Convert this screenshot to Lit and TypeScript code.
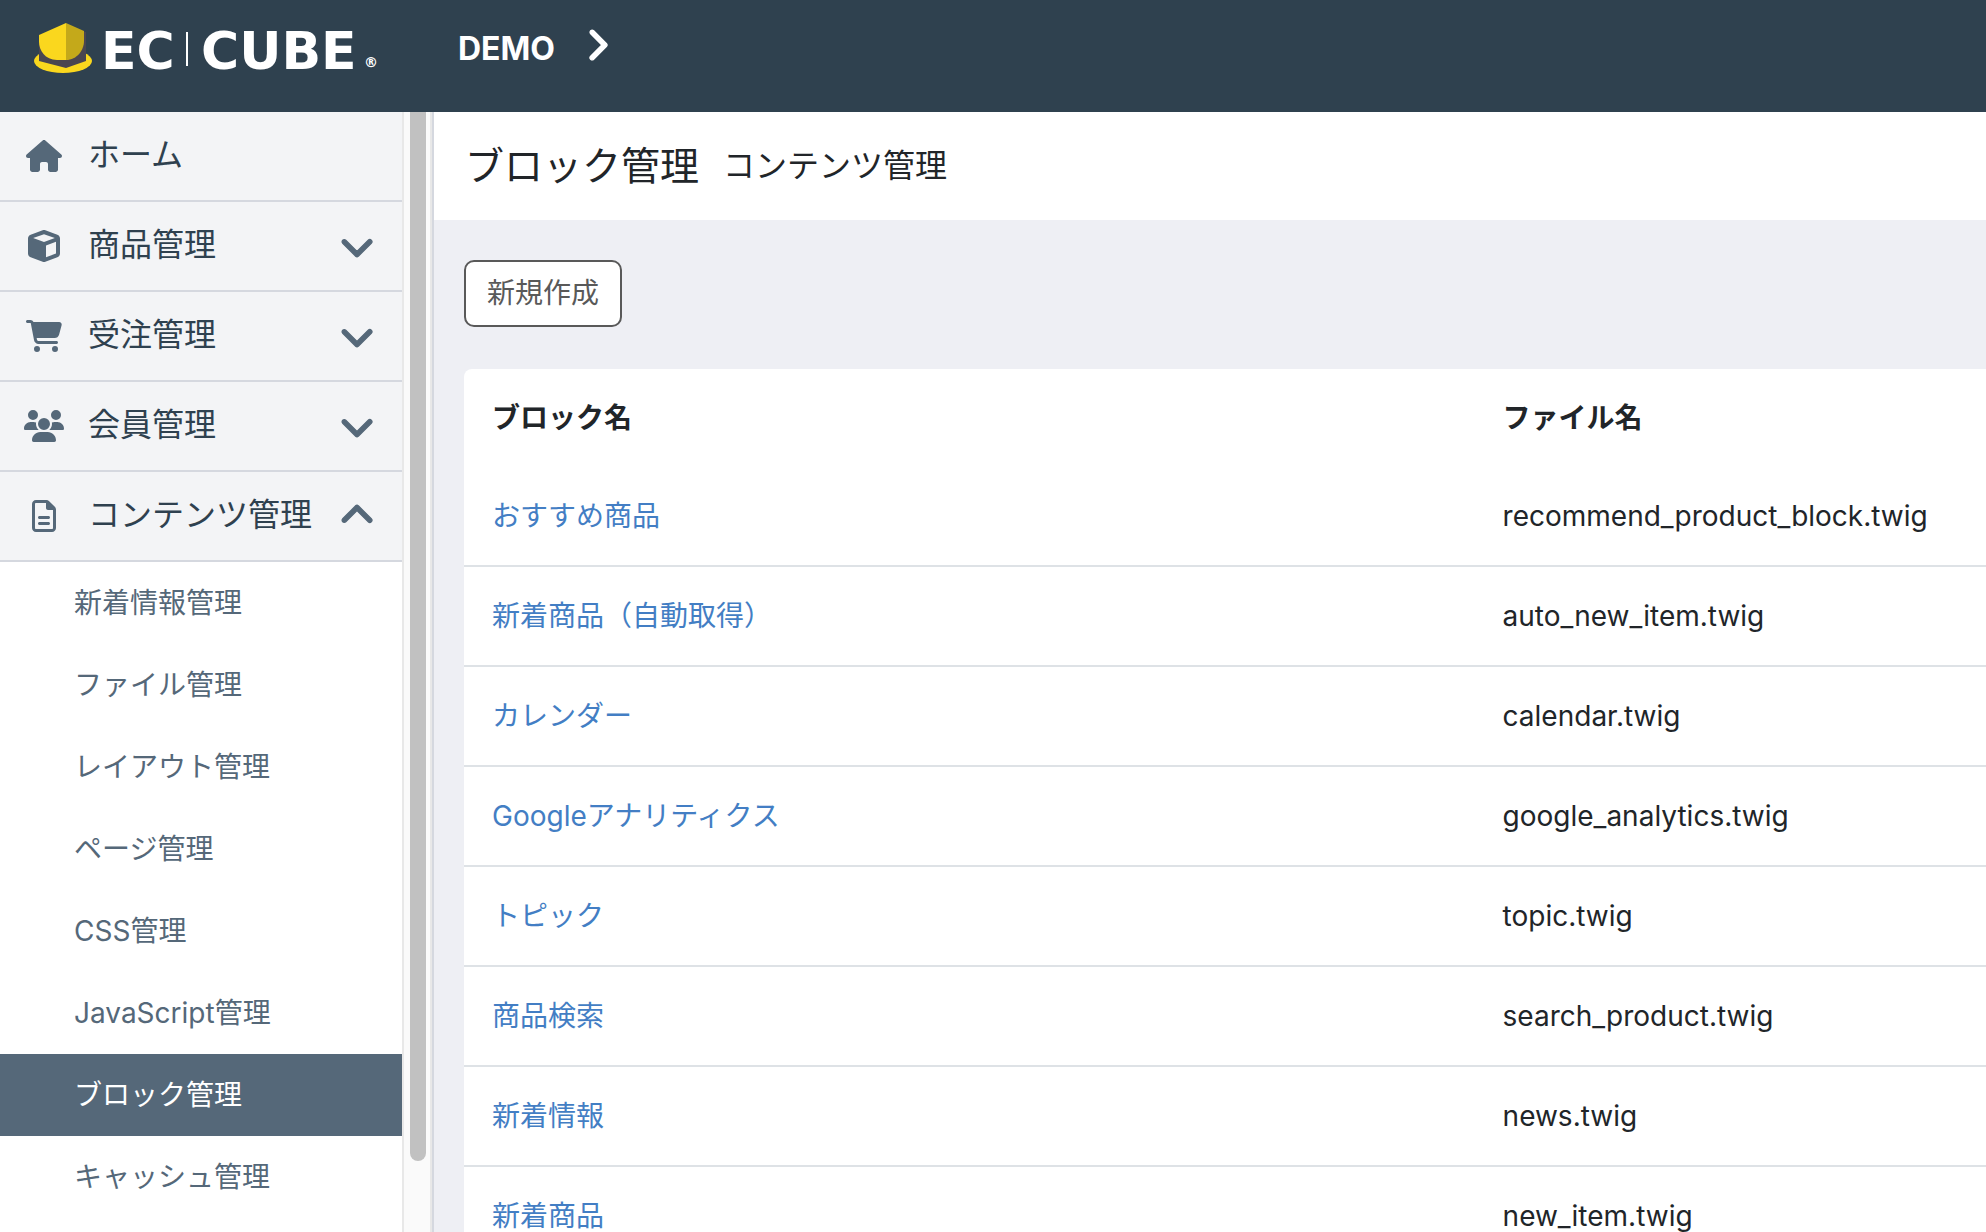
import { LitElement, html, svg, css, nothing } from "lit";
import { customElement, property } from "lit/decorators.js";
import { classMap } from "lit/directives/class-map.js";

interface Icon {
  box: string;
  width: number;
  height: number;
  path: string;
  weight?: number;
}

const icons: Record<string, Icon> = {
  home: {
    box: "0 0 576 512",
    width: 36,
    height: 32,
    path: "M575.8 255.5c0 18-15 32.1-32 32.1h-32l.7 160.2c0 2.7-.2 5.4-.5 8.1V472c0 22.1-17.9 40-40 40H456c-1.1 0-2.2 0-3.3-.1c-1.4 .1-2.8 .1-4.2 .1H416 392c-22.1 0-40-17.9-40-40V448 384c0-17.7-14.3-32-32-32H256c-17.7 0-32 14.3-32 32v64 24c0 22.1-17.9 40-40 40H160 128.1c-1.5 0-3-.1-4.5-.2c-1.2 .1-2.4 .2-3.6 .2H104c-22.1 0-40-17.9-40-40V360c0-.9 0-1.9 .1-2.8V287.6H32c-18 0-32-14-32-32.1c0-9 3-17 10-24L266.4 8c7-7 15-8 22-8s15 2 21 7L564.8 231.5c8 7 12 15 11 24z",
  },
  cube: {
    box: "0 0 512 512",
    width: 32,
    height: 32,
    path: "M234.5 5.7c13.9-5 29.1-5 43.1 0l192 68.6C495 83.4 512 107.5 512 134.6V377.4c0 27-17 51.2-42.5 60.3l-192 68.6c-13.9 5-29.1 5-43.1 0l-192-68.6C17 428.6 0 404.5 0 377.4V134.6c0-27 17-51.2 42.5-60.3l192-68.6zM256 66L82.3 128 256 190l173.7-62L256 66zm32 368.6l160-57.1v-188L288 246.6v188z",
  },
  cart: {
    box: "0 0 576 512",
    width: 36,
    height: 32,
    path: "M0 24C0 10.7 10.7 0 24 0H69.5c22 0 41.5 12.8 50.6 32h411c26.3 0 45.5 25 38.6 50.4l-41 152.3c-8.5 31.4-37 53.3-69.5 53.3H170.7l5.4 28.5c2.2 11.3 12.1 19.5 23.6 19.5H488c13.3 0 24 10.7 24 24s-10.7 24-24 24H199.7c-34.6 0-64.3-24.6-70.7-58.5L77.4 54.5c-.7-3.8-4-6.5-7.9-6.5H24C10.7 48 0 37.3 0 24zM128 464a48 48 0 1 1 96 0 48 48 0 1 1 -96 0zm336-48a48 48 0 1 1 0 96 48 48 0 1 1 0-96z",
  },
  users: {
    box: "0 0 640 512",
    width: 40,
    height: 32,
    path: "M144 0a80 80 0 1 1 0 160A80 80 0 1 1 144 0zM512 0a80 80 0 1 1 0 160A80 80 0 1 1 512 0zM0 298.7C0 239.8 47.8 192 106.7 192h42.7c15.9 0 31 3.5 44.6 9.7c-1.3 7.2-1.9 14.7-1.9 22.3c0 38.2 16.8 72.5 43.3 96c-.2 0-.4 0-.7 0H21.3C9.6 320 0 310.4 0 298.7zM405.3 320c-.2 0-.4 0-.7 0c26.6-23.5 43.3-57.8 43.3-96c0-7.6-.7-15-1.9-22.3c13.6-6.3 28.7-9.7 44.6-9.7h42.7C592.2 192 640 239.8 640 298.7c0 11.8-9.6 21.3-21.3 21.3H405.3zM224 224a96 96 0 1 1 192 0 96 96 0 1 1 -192 0zM128 485.3C128 411.7 187.7 352 261.3 352H378.7C452.3 352 512 411.7 512 485.3c0 14.7-11.9 26.7-26.7 26.7H154.7c-14.7 0-26.7-11.9-26.7-26.7z",
  },
  file: {
    box: "0 0 384 512",
    width: 24,
    height: 32,
    path: "M64 464c-8.8 0-16-7.2-16-16V64c0-8.8 7.2-16 16-16H224v80c0 17.7 14.3 32 32 32h80V448c0 8.8-7.2 16-16 16H64zM64 0C28.7 0 0 28.7 0 64V448c0 35.3 28.7 64 64 64H320c35.3 0 64-28.7 64-64V154.5c0-17-6.7-33.3-18.7-45.3L274.7 18.7C262.7 6.7 246.5 0 229.5 0H64zm56 256c-13.3 0-24 10.7-24 24s10.7 24 24 24H264c13.3 0 24-10.7 24-24s-10.7-24-24-24H120zm0 96c-13.3 0-24 10.7-24 24s10.7 24 24 24H264c13.3 0 24-10.7 24-24s-10.7-24-24-24H120z",
  },
  down: {
    box: "0 0 512 512",
    width: 34,
    height: 34,
    weight: 20,
    path: "M233.4 406.6c12.5 12.5 32.8 12.5 45.3 0l192-192c12.5-12.5 12.5-32.8 0-45.3s-32.8-12.5-45.3 0L256 338.7 86.6 169.4c-12.5-12.5-32.8-12.5-45.3 0s-12.5 32.8 0 45.3l192 192z",
  },
  up: {
    box: "0 0 512 512",
    width: 34,
    height: 34,
    weight: 20,
    path: "M233.4 105.4c12.5-12.5 32.8-12.5 45.3 0l192 192c12.5 12.5 12.5 32.8 0 45.3s-32.8 12.5-45.3 0L256 173.3 86.6 342.6c-12.5 12.5-32.8 12.5-45.3 0s-12.5-32.8 0-45.3l192-192z",
  },
  right: {
    box: "48 0 288 512",
    width: 19,
    height: 34,
    weight: 20,
    path: "M310.6 233.4c12.5 12.5 12.5 32.8 0 45.3l-192 192c-12.5 12.5-32.8 12.5-45.3 0s-12.5-32.8 0-45.3L242.7 256 73.4 86.6c-12.5-12.5-12.5-32.8 0-45.3s32.8-12.5 45.3 0l192 192z",
  },
};

const drawIcon = (name: string) => {
  const i = icons[name];
  return html`<svg width=${i.width} height=${i.height} viewBox=${i.box} aria-hidden="true">
    ${svg`<path fill="currentColor" stroke="currentColor" stroke-width=${i.weight ?? 0} d=${i.path}></path>`}
  </svg>`;
};

interface Section {
  icon: string;
  label: string;
  children?: string[];
  open?: boolean;
}

const sections: Section[] = [
  { icon: "home", label: "ホーム" },
  { icon: "cube", label: "商品管理", children: [] },
  { icon: "cart", label: "受注管理", children: [] },
  { icon: "users", label: "会員管理", children: [] },
  {
    icon: "file",
    label: "コンテンツ管理",
    open: true,
    children: [
      "新着情報管理",
      "ファイル管理",
      "レイアウト管理",
      "ページ管理",
      "CSS管理",
      "JavaScript管理",
      "ブロック管理",
      "キャッシュ管理",
    ],
  },
];

const blocks: [string, string][] = [
  ["おすすめ商品", "recommend_product_block.twig"],
  ["新着商品（自動取得）", "auto_new_item.twig"],
  ["カレンダー", "calendar.twig"],
  ["Googleアナリティクス", "google_analytics.twig"],
  ["トピック", "topic.twig"],
  ["商品検索", "search_product.twig"],
  ["新着情報", "news.twig"],
  ["新着商品", "new_item.twig"],
];

@customElement("admin-header")
class AdminHeader extends LitElement {
  static styles = css`
    :host {
      display: flex;
      align-items: flex-start;
      box-sizing: border-box;
      height: 112px;
      background: #2f414f;
      color: #fff;
    }
    a {
      color: inherit;
      text-decoration: none;
    }
    .logo {
      display: block;
      width: 434px;
      height: 96px;
    }
    .logo svg {
      display: block;
    }
    .word {
      font: 700 52px "DejaVu Sans", sans-serif;
    }
    .mark {
      font: 700 14px "DejaVu Sans", sans-serif;
    }
    .shop {
      display: flex;
      align-items: center;
      gap: 34px;
      padding: 27px 24px;
      font-size: 32px;
      line-height: 44px;
      font-weight: 700;
    }
    .shop svg {
      margin-bottom: 8px;
    }
  `;

  render() {
    return html`
      <a class="logo" href="#" aria-label="EC-CUBE">
        <svg width="400" height="96" viewBox="0 0 400 96">
          <ellipse cx="63" cy="61" rx="29" ry="12" fill="#fad71e"></ellipse>
          <path d="M39 40V61L66 68L86 61V32L66 30Z" fill="#4a4550"></path>
          <path d="M66 23L39 35V42C39 50 45 60 57 60H66Z" fill="#fad71e"></path>
          <path d="M66 23L84 31V41C84 50 77 60 66 60Z" fill="#c4a91a"></path>
          <text class="word" x="101" y="69" fill="#fff">EC</text>
          <rect x="186" y="32" width="2" height="34" fill="#fff"></rect>
          <text class="word" x="201" y="69" fill="#fff">CUBE</text>
          <text class="mark" x="364" y="67" fill="#fff">®</text>
        </svg>
      </a>
      <a class="shop" href="#"><span>DEMO</span>${drawIcon("right")}</a>
    `;
  }
}

@customElement("admin-nav")
class AdminNav extends LitElement {
  @property() current = "";

  static styles = css`
    :host {
      display: flex;
      min-height: 0;
      overflow: hidden;
    }
    nav {
      flex: 1;
      overflow: hidden;
      background: #fff;
    }
    ul {
      list-style: none;
      margin: 0;
      padding: 0;
    }
    .section {
      display: flex;
      align-items: center;
      gap: 20px;
      box-sizing: border-box;
      width: 100%;
      height: 90px;
      padding: 0 28px 0 20px;
      border: 0;
      border-bottom: 2px solid #d5d8df;
      background: #f3f4f6;
      color: #2f414f;
      font: inherit;
      font-size: 32px;
      text-align: left;
      text-decoration: none;
      white-space: nowrap;
      cursor: pointer;
    }
    .icon {
      display: flex;
      justify-content: center;
      width: 48px;
      color: #556879;
    }
    .label {
      flex: 1;
      min-width: 0;
      line-height: 48px;
      padding-bottom: 2px;
    }
    .arrow {
      display: flex;
      color: #556879;
    }
    .page {
      display: block;
      padding: 0 74px;
      font-size: 28px;
      line-height: 82px;
      color: #556879;
      text-decoration: none;
      white-space: nowrap;
    }
    .current {
      background: #556879;
      color: #fff;
    }
    .track {
      box-sizing: border-box;
      width: 30px;
      padding: 0 4px 0 6px;
      border: solid #e8e8e8;
      border-width: 0 2px;
      background: #fafafa;
    }
    .thumb {
      width: 16px;
      height: 1049px;
      max-height: 94%;
      border-radius: 0 0 8px 8px;
      background: #c1c1c1;
    }
  `;

  private heading(s: Section) {
    const icon = html`<span class="icon">${drawIcon(s.icon)}</span><span class="label">${s.label}</span>`;
    return s.children
      ? html`<button class="section" type="button" aria-expanded=${s.open ? "true" : "false"}>
          ${icon}<span class="arrow">${drawIcon(s.open ? "up" : "down")}</span>
        </button>`
      : html`<a class="section" href="#">${icon}</a>`;
  }

  render() {
    return html`
      <nav>
        <ul>
          ${sections.map(
            (s) => html`<li>
              ${this.heading(s)}
              ${s.open
                ? html`<ul>
                    ${s.children!.map(
                      (c) => html`<li>
                        <a href="#" class=${classMap({ page: true, current: c === this.current })}>${c}</a>
                      </li>`
                    )}
                  </ul>`
                : nothing}
            </li>`
          )}
        </ul>
      </nav>
      <div class="track"><div class="thumb"></div></div>
    `;
  }
}

@customElement("block-table")
class BlockTable extends LitElement {
  static styles = css`
    :host {
      display: block;
      background: #fff;
      border-radius: 8px 0 0 0;
    }
    table {
      width: 100%;
      table-layout: fixed;
      border-collapse: separate;
      border-spacing: 0;
      font-size: 28px;
      line-height: 42px;
      color: #212529;
    }
    th,
    td {
      box-sizing: border-box;
      padding: 0 28px;
      text-align: left;
      white-space: nowrap;
    }
    th {
      height: 98px;
      font-weight: 700;
    }
    th:first-child {
      width: 66.4%;
    }
    td {
      height: 100px;
      border-bottom: 2px solid #dee2e6;
    }
    a {
      color: #437ec4;
      text-decoration: none;
    }
  `;

  render() {
    return html`
      <table>
        <thead>
          <tr>
            <th scope="col">ブロック名</th>
            <th scope="col">ファイル名</th>
          </tr>
        </thead>
        <tbody>
          ${blocks.map(
            ([name, file]) => html`<tr>
              <td><a href="#">${name}</a></td>
              <td>${file}</td>
            </tr>`
          )}
        </tbody>
      </table>
    `;
  }
}

@customElement("app-root")
class AppRoot extends LitElement {
  static styles = css`
    :host {
      display: grid;
      grid-template-columns: 432px minmax(0, 1fr);
      grid-template-rows: auto minmax(0, 1fr);
      height: 100vh;
      overflow: hidden;
      font-family: Inter, "Noto Sans CJK JP", sans-serif;
      color: #212529;
    }
    admin-header {
      grid-column: 1 / -1;
    }
    main {
      overflow: hidden;
      border-left: 2px solid #d5d8df;
      background: #eeeff4;
    }
    .title {
      display: flex;
      align-items: center;
      gap: 24px;
      height: 108px;
      padding: 0 31px;
      background: #fff;
    }
    h1,
    h2 {
      margin: 0;
      font-weight: 400;
      white-space: nowrap;
    }
    h1 {
      font-size: 39px;
      line-height: 60px;
    }
    h2 {
      font-size: 32px;
      line-height: 48px;
    }
    .content {
      display: flex;
      flex-direction: column;
      align-items: flex-start;
      gap: 42px;
      padding: 40px 0 0 30px;
    }
    .create {
      padding: 0 21px;
      border: 2px solid #595959;
      border-radius: 10px;
      background: #fff;
      color: #595959;
      font: inherit;
      font-size: 28px;
      line-height: 63px;
      cursor: pointer;
    }
    block-table {
      align-self: stretch;
    }
  `;

  render() {
    return html`
      <admin-header></admin-header>
      <admin-nav current="ブロック管理"></admin-nav>
      <main>
        <div class="title">
          <h1>ブロック管理</h1>
          <h2>コンテンツ管理</h2>
        </div>
        <div class="content">
          <button class="create" type="button">新規作成</button>
          <block-table></block-table>
        </div>
      </main>
    `;
  }
}
